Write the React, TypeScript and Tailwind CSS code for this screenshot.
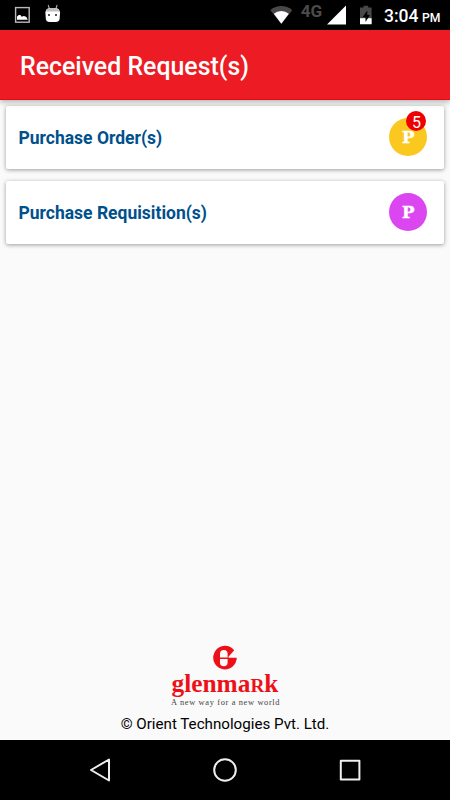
import { ReactNode } from "react";
import { clsx } from "clsx";

function StatusBar() {
  return (
    <div className="flex h-[30px] shrink-0 bg-black text-white">
      <svg width="450" height="30" viewBox="0 0 450 30">
        {/* picture notification */}
        <rect x="15.6" y="7.6" width="13.6" height="14.6" fill="none" stroke="#b9b9b9" strokeWidth="1.4" />
        <path d="M17 19.8v-3.3l1.8-1.6 1.6.2 1.2 1.6 2.2-.6 1.7.4 1.4 1.2.8 2.1z" fill="#fff" />
        {/* android head */}
        <path d="M48.2 5l1.4 4.5M57.1 5l-1.4 4.5" stroke="#aaa" strokeWidth="1.1" />
        <path d="M45.4 12.5q.4-4.3 4.4-4.3h5.8q4 0 4.4 4.3l-.4 6.5q-.4 3-4 3h-5.8q-3.6 0-4-3z" fill="#fff" />
        <path d="M46 11.4q.8-3.2 3.8-3.2h5.8q3 0 3.8 3.2z" fill="#bdbdbd" />
        <rect x="48" y="14" width="2" height="2" fill="#555" />
        <rect x="55" y="14" width="2" height="2" fill="#555" />
        {/* wifi */}
        <path d="M281.3 23.8L270.3 10.2Q275.3 6 281.3 6T292.3 10.2z" fill="#484848" />
        <path d="M281.3 23.8L273.8 13.8Q277 11 281.3 11T288.8 13.8z" fill="#fff" />
        {/* cell signal */}
        <path d="M346 5.6V24.6H327z" fill="#fff" />
        {/* battery */}
        <path d="M363.6 5.8h4.6v1.8h3.4v16.6h-11.6V7.6h3.6z" fill="#484848" />
        <path d="M360 18.2h11.6v6H360z" fill="#fff" />
        <path d="M367.3 10.4l-4.8 6.8h3v4.7l4.4-6.9h-2.6z" fill="#000" />
        <text x="300.8" y="16.8" fontSize="16.5" className="fill-[#4b4b4b] font-bold" textLength="21.5" lengthAdjust="spacingAndGlyphs">4G</text>
        <text x="384" y="22.2" fontSize="18.5" className="fill-white font-medium" textLength="34.5" lengthAdjust="spacingAndGlyphs">3:04</text>
        <text x="422" y="22.2" fontSize="12.5" className="fill-white font-medium" textLength="18.5" lengthAdjust="spacingAndGlyphs">PM</text>
      </svg>
    </div>
  );
}

function Avatar({ tone, count }: { tone: "amber" | "violet"; count?: number }) {
  return (
    <div
      className={clsx(
        "relative mb-[2px] h-[38px] w-[38px] shrink-0 rounded-full",
        tone === "amber" ? "bg-[#fac81e]" : "bg-[#dc46f0]"
      )}
    >
      <svg width="38" height="38" viewBox="0 0 38 38">
        <text
          x="13"
          y="25"
          fontSize="16.5"
          textLength="12.5"
          lengthAdjust="spacingAndGlyphs"
          strokeWidth="0.4"
          className="fill-white stroke-white font-['DejaVu_Serif',serif] font-bold"
        >
          P
        </text>
      </svg>
      {count !== undefined && (
        <span className="absolute -top-[7px] left-[17px] grid h-5 w-5 place-items-center rounded-full bg-[#ee0000] pt-[3px] pl-px text-[16px] leading-[17px] text-white">
          {count}
        </span>
      )}
    </div>
  );
}

function RequestCard({ title, children }: { title: ReactNode; children: ReactNode }) {
  return (
    <div className="flex h-[63px] items-center justify-between rounded-[2px] bg-white pr-[17px] pl-[12.5px] shadow-[0_1px_4px_rgba(0,0,0,0.38)]">
      <span className="pt-[2px] text-[17.5px] font-bold text-[#00508c]">{title}</span>
      {children}
    </div>
  );
}

function BrandLogo() {
  return (
    <svg width="120" height="64" viewBox="165 644 120 64">
      {/* round emblem with the notch on its right side */}
      <path d="M234.2 650.2A11.8 11.8 0 1 0 236.8 657.8H228.5V656.8z" fill="#ee1018" />
      <path d="M220 657.6V653.8a3.8 3.8 0 0 1 7.6 0V657.6zM220 659V662.4a3.8 3.8 0 0 0 7.6 0V659z" fill="#fafafa" />
      <text
        x="171.5"
        y="692"
        fontSize="25"
        textLength="107"
        lengthAdjust="spacingAndGlyphs"
        className="fill-[#ee1018] font-['Liberation_Serif',serif] font-bold"
      >
        glenma<tspan fontSize="19">R</tspan>k
      </text>
      <text
        x="171"
        y="704.6"
        fontSize="8.4"
        textLength="108.5"
        className="fill-[#444] font-['Liberation_Serif',serif]"
      >
        A new way for a new world
      </text>
    </svg>
  );
}

function NavBar() {
  return (
    <div className="h-[60px] shrink-0 bg-black">
      <svg width="450" height="60" viewBox="0 0 450 60" fill="none" stroke="#eee" strokeWidth="2" strokeLinejoin="round">
        <path d="M109 19.5v21L91 30z" />
        <circle cx="225" cy="30" r="10.8" />
        <rect x="340.8" y="20.8" width="18.6" height="18.6" />
      </svg>
    </div>
  );
}

export default function App() {
  return (
    <div className="flex h-[800px] w-[450px] flex-col overflow-hidden bg-[#fafafa] font-[Roboto,sans-serif]">
      <StatusBar />
      <header className="z-10 flex h-[70px] shrink-0 items-center border-b border-[#e30b12] bg-[#ed1c24] pt-[5px] pl-5 shadow-[0_2px_6px_rgba(0,0,0,0.3)]">
        <h1 className="text-[24.9px] font-medium text-white">Received Request(s)</h1>
      </header>
      <main className="flex grow flex-col gap-3 px-1.5 pt-1.5">
        <RequestCard title="Purchase Order(s)">
          <Avatar tone="amber" count={5} />
        </RequestCard>
        <RequestCard title="Purchase Requisition(s)">
          <Avatar tone="violet" />
        </RequestCard>
      </main>
      <footer className="flex h-[96px] shrink-0 flex-col items-center">
        <BrandLogo />
        <p className="mt-[5px] text-[15.15px] leading-[22px] text-black">© Orient Technologies Pvt. Ltd.</p>
      </footer>
      <NavBar />
    </div>
  );
}
